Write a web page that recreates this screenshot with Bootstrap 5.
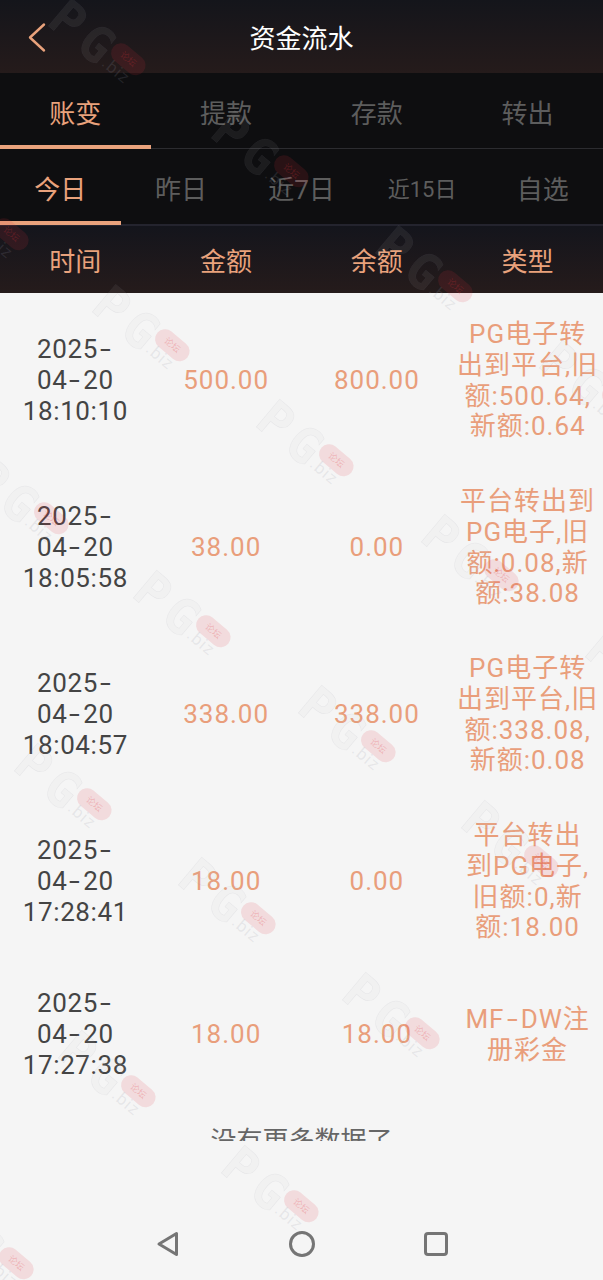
<!DOCTYPE html>
<html lang="zh-CN">
<head>
    <meta charset="UTF-8">
    <meta name="viewport" content="width=device-width, initial-scale=1.0">
    <title>资金流水</title>
    <link href="https://cdn.jsdelivr.net/npm/bootstrap@5.3.0/dist/css/bootstrap.min.css" rel="stylesheet">
    <style>
        body {
            font-family: Roboto, "Noto Sans CJK SC", sans-serif;
            background: #f5f5f5;
            width: 603px;
            height: 1280px;
            overflow: hidden;
        }
        .page-wrap { height: 1280px; overflow: hidden; }
        .top-bar {
            height: 73px;
            padding-top: 6px;
            background: linear-gradient(#14151b, #251b1b);
            color: #fff;
            font-size: 26px;
        }
        .back-btn { left: 28px; top: 22px; }
        .tab-bar { background: #0e0e10; font-size: 26px; line-height: 1; }
        .tab-one { height: 76px; padding-top: 6px; border-bottom: 1px solid #2c2c30; }
        .tab-two { height: 77px; padding-top: 7px; border-bottom: 2px solid #24242e; }
        .tab-item { color: #5d5d5d; }
        .tab-item.on { color: #e9a27c; }
        .tab-item.on::after {
            content: "";
            position: absolute;
            left: 0;
            right: 0;
            bottom: -1px;
            height: 4px;
            background: #e9a27c;
        }
        .tab-small { font-size: 22px; }
        .head-bar {
            height: 67px;
            padding-top: 5px;
            background: linear-gradient(#14151c, #251b1b);
            color: #e9a27c;
            font-size: 26px;
        }
        .list-box {
            height: 848px;
            padding-top: 4px;
            font-size: 26px;
            line-height: 30.7px;
            overflow: hidden;
            color: #e99e7b;
            letter-spacing: 1px;
        }
        .flow-row { min-height: 167px; }
        .flow-row.short { min-height: 139px; }
        .flow-time { color: #444; letter-spacing: .6px; }
        .dash-wide { display: inline-block; margin: 0 4px; transform: scaleX(1.5); }
        .no-more { color: #666; margin-top: 22px; letter-spacing: 0; }
        .sys-nav { height: 139px; padding-top: 89px; }
        .sys-icon { width: 134px; }
        .wm-box { position: absolute; inset: 0; pointer-events: none; overflow: hidden; z-index: 5; }
        .wm-item {
            position: absolute;
            width: 0;
            height: 0;
            transform: rotate(40deg);
            transform-origin: 0 0;
        }
        .wm-pg {
            position: absolute;
            left: -17px;
            top: -27px;
            font: 700 50px/1 "DejaVu Sans Mono", monospace;
            letter-spacing: 7px;
            white-space: nowrap;
            color: rgba(200, 200, 210, .08);
            -webkit-text-stroke: .5px rgba(130, 130, 150, .1);
        }
        .wm-pill {
            position: absolute;
            left: 50px;
            top: -21px;
            width: 39px;
            height: 20px;
            border-radius: 10px;
            background: rgba(225, 50, 60, .13);
            color: rgba(225, 50, 60, .25);
            font-size: 9px;
            line-height: 20px;
            text-align: center;
            white-space: nowrap;
        }
        .wm-biz {
            position: absolute;
            left: 52px;
            top: -3px;
            font-size: 17px;
            line-height: 1;
            letter-spacing: 1px;
            color: rgba(150, 150, 165, .16);
        }
    </style>
</head>
<body>
    <div class="page-wrap position-relative d-flex flex-column">
        <!-- cabecalho -->
        <div class="top-bar position-relative d-flex align-items-center justify-content-center flex-shrink-0">
            <svg class="back-btn position-absolute" width="20" height="32" viewBox="0 0 20 32" fill="none">
                <path d="M16 2.5 2 15.5l14 13" stroke="#e9a27c" stroke-width="2.4" stroke-linecap="round" stroke-linejoin="round"/>
            </svg>
            <span>资金流水</span>
        </div>

        <div class="tab-bar flex-shrink-0">
            <div class="row g-0 text-center tab-one">
                <div class="col-3 tab-item on position-relative d-flex align-items-center justify-content-center">账变</div>
                <div class="col-3 tab-item d-flex align-items-center justify-content-center">提款</div>
                <div class="col-3 tab-item d-flex align-items-center justify-content-center">存款</div>
                <div class="col-3 tab-item d-flex align-items-center justify-content-center">转出</div>
            </div>
            <div class="row row-cols-5 g-0 text-center tab-two">
                <div class="col tab-item on position-relative d-flex align-items-center justify-content-center">今日</div>
                <div class="col tab-item d-flex align-items-center justify-content-center">昨日</div>
                <div class="col tab-item d-flex align-items-center justify-content-center">近7日</div>
                <div class="col tab-item tab-small d-flex align-items-center justify-content-center">近15日</div>
                <div class="col tab-item d-flex align-items-center justify-content-center">自选</div>
            </div>
        </div>

        <div class="head-bar row g-0 text-center align-items-center flex-shrink-0">
            <div class="col-3">时间</div>
            <div class="col-3">金额</div>
            <div class="col-3">余额</div>
            <div class="col-3">类型</div>
        </div>

        <!-- lista -->
        <div class="list-box flex-shrink-0 text-center text-nowrap" id="flowList"></div>

        <div class="sys-nav d-flex justify-content-center align-items-start flex-shrink-0">
            <div class="sys-icon text-center">
                <svg width="24" height="28" viewBox="0 0 24 28" fill="none"><path d="M20.5 3.5v21L3 14z" stroke="#757575" stroke-width="3" stroke-linejoin="round"/></svg>
            </div>
            <div class="sys-icon text-center">
                <svg width="28" height="28" viewBox="0 0 28 28" fill="none"><circle cx="14" cy="14" r="11.5" stroke="#757575" stroke-width="3"/></svg>
            </div>
            <div class="sys-icon text-center">
                <svg width="28" height="28" viewBox="0 0 28 28" fill="none"><rect x="3.5" y="3.5" width="21" height="21" rx="2.5" stroke="#757575" stroke-width="3"/></svg>
            </div>
        </div>

        <div class="wm-box" id="wmBox"></div>
    </div>

    <script src="https://cdn.jsdelivr.net/npm/bootstrap@5.3.0/dist/js/bootstrap.bundle.min.js"></script>
    <script>
        const traco = '<span class="dash-wide">-</span>';
        const registros = [
            { hora: `2025${traco}<br>04${traco}20<br>18:10:10`, valor: '500.00', saldo: '800.00', tipo: 'PG电子转<br>出到平台,旧<br>额:500.64,<br>新额:0.64' },
            { hora: `2025${traco}<br>04${traco}20<br>18:05:58`, valor: '38.00', saldo: '0.00', tipo: '平台转出到<br>PG电子,旧<br>额:0.08,新<br>额:38.08' },
            { hora: `2025${traco}<br>04${traco}20<br>18:04:57`, valor: '338.00', saldo: '338.00', tipo: 'PG电子转<br>出到平台,旧<br>额:338.08,<br>新额:0.08' },
            { hora: `2025${traco}<br>04${traco}20<br>17:28:41`, valor: '18.00', saldo: '0.00', tipo: '平台转出<br>到PG电子,<br>旧额:0,新<br>额:18.00' },
            { hora: `2025${traco}<br>04${traco}20<br>17:27:38`, valor: '18.00', saldo: '18.00', tipo: `MF${traco}DW注<br>册彩金`, curto: true }
        ];

        document.getElementById('flowList').innerHTML = registros.map(r => `
            <div class="flow-row row g-0 align-items-center ${r.curto ? 'short' : ''}">
                <div class="col-3 flow-time">${r.hora}</div>
                <div class="col-3">${r.valor}</div>
                <div class="col-3">${r.saldo}</div>
                <div class="col-3">${r.tipo}</div>
            </div>
        `).join('') + '<div class="no-more">没有更多数据了</div>';

        // marca d'agua: centro do P = centro da pilula - (59, 35)
        const pilulas = [[127,58],[290,170],[454,285],[618,400],[10,233],[171,344],[335,459],[500,574],[664,689],[50,517],[212,630],[377,745],[540,860],[93,803],[257,917],[421,1032],[137,1090],[300,1205],[15,1262]];
        document.getElementById('wmBox').innerHTML = pilulas.map(p =>
            `<div class="wm-item" style="left:${p[0] - 59}px;top:${p[1] - 35}px"><span class="wm-pg">PG</span><span class="wm-pill">论坛</span><span class="wm-biz">.biz</span></div>`
        ).join('');
    </script>
</body>
</html>
